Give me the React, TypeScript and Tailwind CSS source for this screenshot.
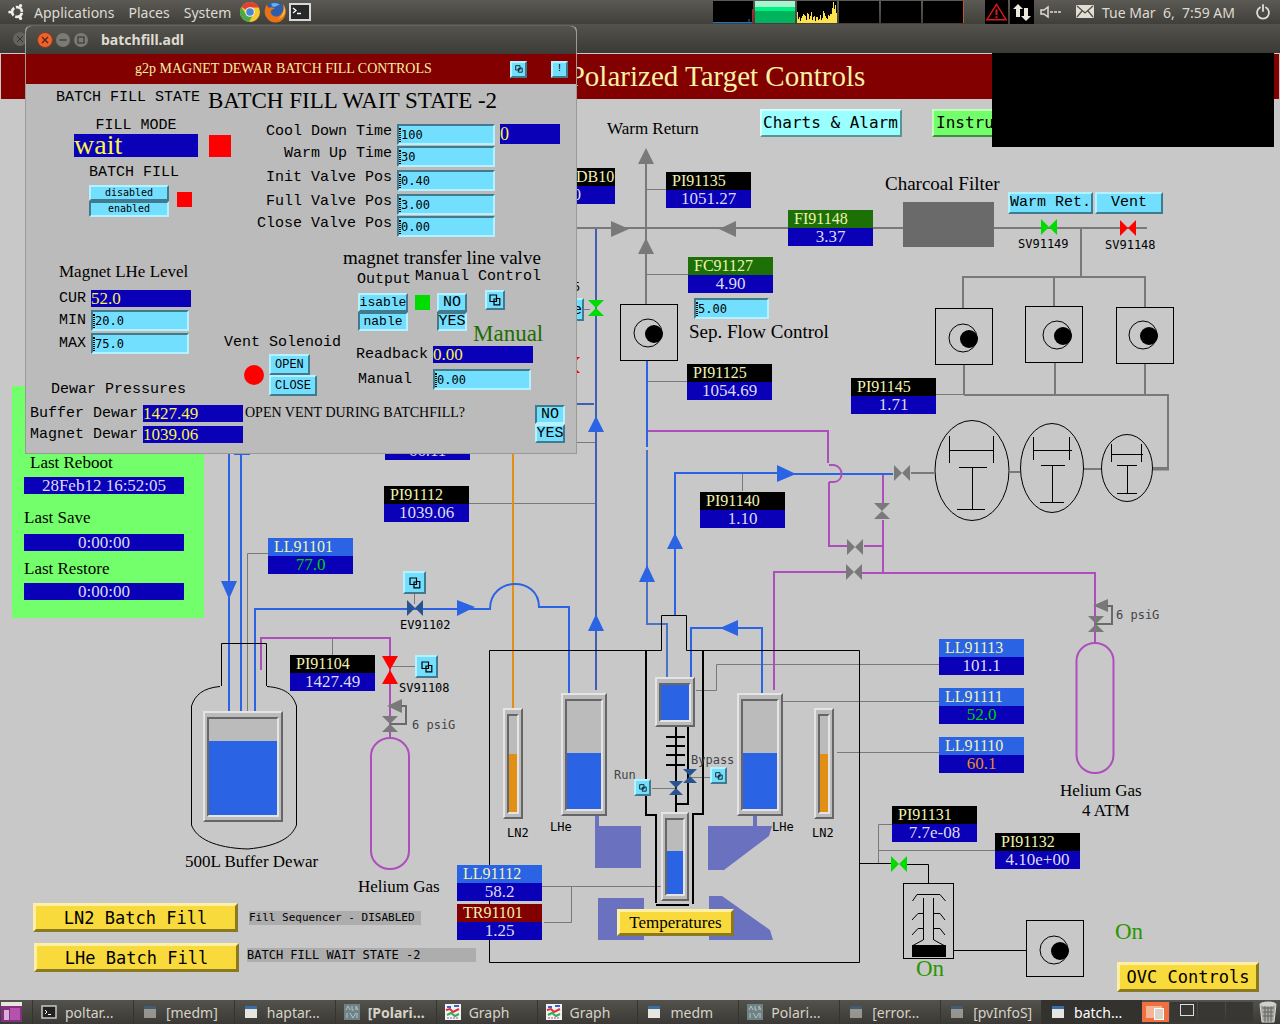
import React from "react";

const SERIF = "font-['Liberation_Serif',serif]";
const MONO = "font-['Liberation_Mono',monospace]";
const CYAN_UP = "border-2 border-t-[#b5f1ff] border-l-[#b5f1ff] border-b-[#417a8c] border-r-[#417a8c] bg-[#73dfff] text-black";
const CYAN_DOWN = "border-2 border-t-[#417a8c] border-l-[#417a8c] border-b-[#b5f1ff] border-r-[#b5f1ff] bg-[#73dfff] text-black";
const YELLOW = "border-[3px] border-t-[#fdf0a4] border-l-[#fdf0a4] border-b-[#8a7920] border-r-[#8a7920] bg-[#f9da3c] text-black";

type Tone = "black" | "green" | "blue" | "red";
const tones: Record<Tone, string> = {
  black: "bg-black",
  green: "bg-[#1c7006]",
  blue: "bg-[#2a63e4]",
  red: "bg-[#820000]",
};

function Tag({ at, name, value, tone = "black", color = "text-[#dcdcf0]", pad = "pl-1.5" }: { at: string; name: string; value: string; tone?: Tone; color?: string; pad?: string }) {
  return (
    <div className={`absolute w-[85px] leading-[18px] ${SERIF} ${at}`}>
      <div className={`h-[18px] text-[16px] text-[#f0f2b0] ${pad} ${tones[tone]}`}>{name}</div>
      <div className={`h-[18px] bg-[#0a00b8] text-center text-[17px] ${color}`}>{value}</div>
    </div>
  );
}

function Label({ at, children }: { at: string; children: React.ReactNode }) {
  return <span className={`absolute whitespace-pre leading-4 ${at}`}>{children}</span>;
}

function Readout({ className, children }: { className: string; children: React.ReactNode }) {
  return <output className={`block bg-[#0a00b8] text-[#f9f34a] ${SERIF} ${className}`}>{children}</output>;
}

function Field({ label, value, className }: { label: string; value: string; className: string }) {
  return (
    <span className={`block h-[21px] ${className}`}>
      <input aria-label={label} defaultValue={value} className={`block h-full w-full rounded-none pl-0.5 font-['DejaVu_Sans_Mono',monospace] text-[12px] outline-none ${CYAN_DOWN}`} />
      <span className="pointer-events-none absolute left-0.5 top-1 h-3.5 w-0.5 border-x border-dotted border-black" />
    </span>
  );
}

function PagesIcon({ className }: { className: string }) {
  return (
    <svg viewBox="0 0 12 12" className={className} fill="none" stroke="black" strokeWidth="1.2" aria-hidden="true">
      <path d="M1 1H7.5V7.5H1Z M5 8V10.8H10.8V4.5H8" />
      <path d="M5 8V5H8" />
    </svg>
  );
}

function RelatedButton({ at, small, label }: { at: string; small?: boolean; label: string }) {
  return (
    <button aria-label={label} className={`flex items-center justify-center ${small ? "size-[17px]" : "size-[23px]"} ${CYAN_UP} ${at}`}>
      <PagesIcon className={small ? "size-2" : "size-3"} />
    </button>
  );
}

function Valve({ x, y, fill = "#797979", vertical, r = 8 }: { x: number; y: number; fill?: string; vertical?: boolean; r?: number }) {
  const d = vertical
    ? `M${x - r} ${y - r}H${x + r}L${x} ${y}L${x + r} ${y + r}H${x - r}L${x} ${y}Z`
    : `M${x - r} ${y - r}V${y + r}L${x} ${y}L${x + r} ${y + r}V${y - r}L${x} ${y}Z`;
  return <path d={d} fill={fill} />;
}

function Pump({ x, y, cx, cy }: { x: number; y: number; cx: number; cy: number }) {
  return (
    <g>
      <rect x={x + 0.5} y={y + 0.5} width="57" height="56" fill="none" stroke="black" />
      <circle cx={cx} cy={cy} r="14" fill="none" stroke="black" />
      <circle cx={cx + 6} cy={cy + 1} r="9" fill="black" />
    </g>
  );
}

function Gauge({ x, y, w, h, level, fill = "#2a63e4" }: { x: number; y: number; w: number; h: number; level: number; fill?: string }) {
  const ix = x + 4, iy = y + 6, iw = w - 8, ih = h - 11;
  return (
    <g>
      <rect x={x} y={y} width={w} height={h} fill="#bbbbbb" />
      <path d={`M${x} ${y + h}V${y}H${x + w}L${x + w - 2} ${y + 2}H${x + 2}V${y + h - 2}Z`} fill="#e4e4e4" />
      <path d={`M${x} ${y + h}H${x + w}V${y}L${x + w - 2} ${y + 2}V${y + h - 2}H${x + 2}Z`} fill="#666666" />
      <path d={`M${ix} ${iy + ih}V${iy}H${ix + iw}L${ix + iw - 2} ${iy + 2}H${ix + 2}V${iy + ih - 2}Z`} fill="#666666" />
      <path d={`M${ix} ${iy + ih}H${ix + iw}V${iy}L${ix + iw - 2} ${iy + 2}V${iy + ih - 2}H${ix + 2}Z`} fill="#e4e4e4" />
      <rect x={ix + 2} y={level} width={iw - 4} height={iy + ih - 2 - level} fill={fill} />
    </g>
  );
}

function Diagram() {
  return (
    <svg className="absolute left-0 top-0 h-[1000px] w-[1280px]" viewBox="0 0 1280 1000" fill="none" aria-hidden="true">
      <g fill="#6a72c0">
        <path d="M595 816H599V826H641V868H595Z M753 816H757V826H772L769 836L724 870H708V826H753Z M598 898H644V940H598Z M709 896H722L770 930L773 940H709Z" />
      </g>
      <g stroke="#797979" strokeWidth="2">
        <path d="M646 160V304M576 228H903M994 228H1147M1081 229V276M963 308V277H1145V307M1054 277V306M964 365V395M1055 362V395M1145 364V395M964 395H1168V468H1153M1010 472H1020M1084 469H1101M911 473H934" />
        <path d="M1153 469H1169" strokeWidth="3" />
      </g>
      <g stroke="#797979">
        <path d="M647 189.5H666M647 274.5H688M647 381.5H687M936 394.5H964M742.5 474V491M577 442.5H596M583 309.5H590M469 503.5H595M247.5 711V553.5H268M414.5 593V604M332.5 638V655M392 666.5H415M696 690.5H716.5V664.5H939M783 701.5H939M837 752.5H939M542 886.5H661M571.5 886V922.5H544M652 788.5H676M691 777.5H710M892 824.5H878.5V863M878 850.5H995" />
      </g>
      <path d="M513 454V708" stroke="#e19015" strokeWidth="2" />
      <g stroke="#ae4ebc" strokeWidth="2">
        <path d="M648 431H828V463M829 482V546H847M864 546H883M883 474V503M883 520V573M846 572H774V690M862 573H1095V642M261 670V638H390V738" />
        <path d="M371 756A19 18 0 0 1 409 756V851A19 18 0 0 1 371 851Z" />
        <path d="M1076.500 661A18.500 18 0 0 1 1113.500 661V755A18.500 18 0 0 1 1076.500 755Z" />
      </g>
      <g stroke="#2a63e4" strokeWidth="2">
        <path d="M229 453V712M241 454V712M234 454H250M255 712V609H490C490 576 539 576 539 607H569V693M647 361V447M675 615V473H780M790 474H893M691 677V628H762V693" />
      </g>
      <path d="M596 229V690M576 404H594" stroke="#3d60b0" strokeWidth="2" />
      <path d="M647 450V624H667V677" stroke="#4a72c8" strokeWidth="2" />
      <path d="M829 465H834C844 467 844 481 834 482H829" stroke="#ae4ebc" strokeWidth="2" />

      <g stroke="black">
        <path d="M489.500 650.500H661.500V615.500H686.500V650.500H859.500V962.500H489.500Z" />
        <path d="M221.500 686V643.500H266.500V686M220 686.500C203 688 195 695 191.500 706V825C196 838 214 848 248 849C279 846 292 837 296.500 825V706C293 695 286 688 267 686.500" />
        <path d="M860 863.500H891M907 864.500H928.500V883M953 950.500H1026" />
        <ellipse cx="972" cy="470.500" rx="37" ry="50" />
        <ellipse cx="1052" cy="468" rx="31.500" ry="44.500" />
        <ellipse cx="1127" cy="468" rx="25.500" ry="33.500" />
        <path d="M949.500 436V463M993.500 436V463M949 450.500H993M959 467.500H987M972.500 467V509M957 509.500H985" />
        <path d="M1033.500 437V460M1069.500 437V460M1033 450.500H1072M1041 465.500H1065M1052.500 465V502M1040 502.500H1064" />
        <path d="M1111.500 444V462M1141.500 444V462M1111 454.500H1143M1117 465.500H1137M1127.500 465V493M1117 493.500H1137" />
        <rect x="903.500" y="883.500" width="50" height="75" />
        <path d="M912.500 901L917 894.500H940L945.500 901M923.500 898V940M933.500 898V940M923 913.500H918L912 920M934 913.500H940L945 920M923 928.500H918L912 935M934 928.500H940L945 935M923 940L912 946M934 940L945 946" />
      </g>
      <g stroke="black" strokeWidth="2">
        <path d="M646 650V815H656V903M656 905H689M703 650V814H693V904M676 727V812M688 727V804H676M666 737H685M666 746H685M666 755H685M666 765H685" />
      </g>
      <rect x="912" y="945" width="34" height="12" fill="black" />
      <rect x="903" y="202" width="91" height="45" fill="#6a6a6a" />

      <g fill="#797979">
        <path d="M646 148L654 164H638ZM646 238L654 254H638ZM611 221V237L629 229ZM736 221V237L719 229Z" />
        <path d="M1093 605.500L1108 599V612ZM387 706L402 699V713Z" />
      </g>
      <g stroke="#6a6a6a" strokeWidth="2">
        <path d="M1107 606H1112V624H1095M401 706H406V724H390" />
      </g>
      <g fill="#2a63e4">
        <path d="M596 416L604 432H588ZM596 614L604 631H588ZM647 565L655 582H639ZM675 533L683 549H667ZM777 465V482L796 474ZM457 600V616L475 607ZM229 599L221 581H237ZM720 628L738 620V636Z" />
      </g>

      <Valve x={902} y={473} />
      <Valve x={882} y={511} vertical />
      <Valve x={855} y={547} />
      <Valve x={854} y={572} />
      <Valve x={1096} y={624} vertical />
      <Valve x={390} y={724} vertical />
      <Valve x={1049} y={227} fill="#00dc00" r={8} />
      <Valve x={1128} y={228} fill="#ff0000" r={8} />
      <Valve x={596} y={308} fill="#00dc00" vertical />
      <Valve x={572} y={365} fill="#ff0000" vertical />
      <Valve x={899} y={864} fill="#00dc00" />
      <Valve x={415} y={608} fill="#27548f" />
      <Valve x={676} y={788} fill="#27548f" vertical r={7} />
      <Valve x={690} y={776} fill="#27548f" vertical r={7} />
      <path d="M382 656H398L390 670L398 684H382L390 670Z" fill="#ff0000" />

      <Pump x={620} y={304} cx={648} cy={333} />
      <Pump x={935} y={308} cx={963} cy={338} />
      <Pump x={1025} y={306} cx={1057} cy={335} />
      <Pump x={1116} y={307} cx={1143} cy={335} />
      <Pump x={1026} y={920} cx={1054} cy={950} />

      <Gauge x={203} y={711} w={80} h={111} level={741} />
      <Gauge x={503} y={708} w={20} h={111} level={754} fill="#e19015" />
      <Gauge x={561} y={693} w={46} h={123} level={753} />
      <Gauge x={655} y={677} w={40} h={50} level={685} />
      <Gauge x={661} y={812} w={28} h={89} level={851} />
      <Gauge x={737} y={693} w={46} h={123} level={753} />
      <Gauge x={814} y={708} w={20} h={111} level={754} fill="#e19015" />
    </svg>
  );
}

function MenuIcons() {
  return (
    <div className="ml-2 flex items-center gap-0.5">
      <svg viewBox="0 0 22 22" className="size-[22px]" aria-label="Chrome">
        <circle cx="11" cy="11" r="10" fill="#f6ca2c" />
        <path d="M11 11L2.300 6A10 10 0 0 1 20 6.500H11Z" fill="#dd4132" />
        <path d="M2.300 6A10 10 0 0 0 10 21L14.500 13L7 13.500Z" fill="#4ca84a" />
        <circle cx="11" cy="11" r="4.800" fill="#f2f2f2" />
        <circle cx="11" cy="11" r="3.800" fill="#4a86d4" />
      </svg>
      <svg viewBox="0 0 24 24" className="size-6" aria-label="Firefox">
        <circle cx="12" cy="12" r="10" fill="#2b5fae" />
        <path d="M4 4C2 8 0 13 4 18C8 24 17 24 21 18C24 13 23 7 20 4C21 8 21 11 18 14C15 18 9 17 8 13C7 11 9 9 12 9C10 7 7 7 6 8C5 7 4 6 4 4Z" fill="#ea7216" />
        <path d="M20 4C22 9 20 16 15 19C20 18 23 13 22 9Z" fill="#f7bd3a" />
        <path d="M8 4C11 2 15 3 17 5C14 5 13 7 10 7Z" fill="#72aee6" />
      </svg>
      <svg viewBox="0 0 22 18" className="h-[18px] w-[22px]" aria-label="Terminal">
        <rect x="1" y="1" width="20" height="16" fill="#26282a" stroke="#d8d8d8" strokeWidth="2" />
        <path d="M4 5L7 7.500L4 10M8 10.500H12" stroke="white" fill="none" strokeWidth="1.300" />
      </svg>
    </div>
  );
}

function SystemMonitor() {
  const load = [11, 4, 6, 2, 5, 7, 9, 8, 7, 3, 10, 9, 4, 7, 11, 3, 6, 7, 2, 6, 6, 3, 4, 8, 3, 5, 12, 10, 7, 5, 4, 8, 7, 9, 9, 15, 21, 14, 18, 10];
  return (
    <div className="flex gap-0.5 border-r border-[#c05a20]" role="img" aria-label="System monitor">
      <svg viewBox="0 0 40 22" className="h-[22px] w-10 bg-black"><path d="M0 21.500H40M36 22V18" stroke="#1476c8" /><path d="M39.500 22V8" stroke="#e01010" /></svg>
      <svg viewBox="0 0 40 22" className="h-[22px] w-10"><path d="M0 0H40V6H0Z" fill="#a5f5d0" /><path d="M0 6H40V10H0Z" fill="#00f082" /><path d="M0 10H40V22H0Z" fill="#00b35c" /></svg>
      <svg viewBox="0 0 40 22" className="h-[22px] w-10 bg-black">{load.map((v, i) => <rect key={i} x={i} y={22 - v} width="1" height={v} fill="#fbe24c" />)}</svg>
      <div className="h-[22px] w-10 bg-black" /><div className="h-[22px] w-10 bg-black" /><div className="h-[22px] w-10 bg-black" />
    </div>
  );
}

function TopPanel() {
  return (
    <header className="flex h-6 shrink-0 items-center bg-linear-to-b from-[#5b5a54] to-[#403f3a] pl-2 text-[14px] text-[#dfdbd2]">
      <svg viewBox="0 0 20 20" className="size-[18px]" fill="none" aria-hidden="true">
        <circle cx="10" cy="10" r="5.500" stroke="#eeeeee" strokeWidth="3" strokeDasharray="9.500 2" strokeDashoffset="-1" />
        <g fill="#eeeeee"><circle cx="2" cy="10" r="1.800" /><circle cx="14" cy="2.800" r="1.800" /><circle cx="14" cy="17.200" r="1.800" /></g>
      </svg>
      <nav className="ml-2 flex gap-3.5">
        <button>Applications</button><button>Places</button><button>System</button>
      </nav>
      <MenuIcons />
      <div className="ml-auto flex items-center">
        <SystemMonitor />
        <div className="ml-[21px] flex gap-0.5">
          <svg viewBox="0 0 24 24" className="h-6 w-[23px] bg-black" fill="none" stroke="#e01818" aria-label="Alert"><path d="M12 4L22 20H2Z" strokeWidth="1.500" /><path d="M12 9V15M12 16.500V18.500" strokeWidth="2" /></svg>
          <svg viewBox="0 0 24 24" className="size-6 bg-black" fill="#eee8dc" aria-label="Network"><path d="M8 4L13 9H10V17H6V9H3ZM16 21L11 16H14V8H18V16H21Z" /></svg>
        </div>
        <svg viewBox="0 0 22 16" className="ml-1.5 h-4 w-[22px]" fill="none" stroke="#dfdbd2" aria-label="Volume"><path d="M1 6H4L8 3V13L4 10H1Z" strokeWidth="1.500" /><path d="M10 8H21" strokeDasharray="3 1" strokeWidth="1.500" /></svg>
        <svg viewBox="0 0 18 14" className="ml-3.5 h-3.5 w-[18px]" aria-label="Mail"><rect width="18" height="13" rx="1" fill="#e3ded3" /><path d="M1 1L9 8L17 1M1 12L6 6M17 12L12 6" stroke="#504f4a" fill="none" strokeWidth="1.300" /></svg>
        <time className="ml-2 whitespace-pre text-[14px]">Tue Mar  6,  7:59 AM</time>
        <svg viewBox="0 0 16 16" className="ml-5 mr-[9px] size-4" fill="none" stroke="#e3ded3" strokeWidth="1.800" strokeLinecap="round" aria-label="Power"><path d="M5 3.500A6 6 0 1 0 11 3.500M8 1V7" /></svg>
      </div>
    </header>
  );
}

function WindowIcons() {
  return (
    <svg viewBox="0 0 54 18" className="h-[18px] w-[54px]" aria-hidden="true">
      <circle cx="9" cy="9" r="7.500" fill="#ec6330" stroke="#8a3a1c" /><path d="M6 6L12 12M12 6L6 12" stroke="#5a2412" strokeWidth="1.300" />
      <circle cx="27" cy="9" r="7" fill="#7b7a73" /><path d="M23.500 9H30.500" stroke="#3a3935" strokeWidth="1.300" />
      <circle cx="45" cy="9" r="7" fill="#7b7a73" /><rect x="42" y="6" width="6" height="6" fill="none" stroke="#3a3935" strokeWidth="1.200" />
    </svg>
  );
}

function BatchFillWindow() {
  const fields: [string, string, string][] = [
    ["Cool Down Time", "100", ""],
    ["Warm Up Time", "30", ""],
    ["Init Valve Pos", "0.40", "mt-0.5"],
    ["Full Valve Pos", "3.00", "mt-0.5"],
    ["Close Valve Pos", "0.00", ""],
  ];
  return (
    <section aria-label="batchfill.adl" className={`absolute left-[25px] top-[25px] w-[552px] rounded-t-md border border-[#9c9a94] border-t-[#65645e] bg-[#bbbbbb] pb-2.5 text-black ${MONO} text-[15px] leading-4`}>
      <div className="flex h-7 items-center rounded-t-md bg-linear-to-b from-[#55544e] to-[#3c3b37] pl-2.5 font-['Noto_Sans',sans-serif]">
        <WindowIcons />
        <h2 className="ml-[11px] text-[14px] font-bold text-[#dfdbd2]">batchfill.adl</h2>
      </div>
      <div className="flex h-[30px] items-center bg-[#820000] pr-2">
        <h3 className={`ml-[109px] text-[14px] text-[#f8f0a8] ${SERIF}`}>g2p MAGNET DEWAR BATCH FILL CONTROLS</h3>
        <div className="ml-auto flex gap-6">
          <RelatedButton at="" small label="Related displays" />
          <button className={`flex size-[17px] items-center justify-center text-[10px] ${CYAN_UP}`}>!</button>
        </div>
      </div>

      <div className="flex h-[34px] items-center gap-2 pl-[30px]">
        <span className="-mt-1.5">BATCH FILL STATE</span>
        <output className={`whitespace-nowrap text-[23px] ${SERIF}`}>BATCH FILL WAIT STATE -2</output>
      </div>

      <div className="flex h-[130px]">
        <div className="w-[214px] pl-12">
          <div className="w-[124px] text-center">FILL MODE</div>
          <div className="flex items-center gap-[11px]">
            <Readout className="h-[23px] w-[124px] text-[28px] leading-[22px]">wait</Readout>
            <span className="size-[22px] bg-[#ff0000]" />
          </div>
          <div className="mt-2 pl-[15px]">BATCH FILL</div>
          <div className="mt-1 flex items-center gap-2 pl-[15px]">
            <div className="flex w-20 flex-col font-['DejaVu_Sans_Mono',monospace] text-[10px] leading-3">
              <button className={`h-4 ${CYAN_UP}`}>disabled</button>
              <button className={`h-4 ${CYAN_DOWN}`}>enabled</button>
            </div>
            <span className="-mt-1 size-[15px] bg-[#ff0000]" />
          </div>
        </div>
        <div className="flex gap-[5px] pt-1.5">
          <div>
            {fields.map(([name, value, gap]) => (
              <label key={name} className={`flex h-[22px] items-start gap-[5px] ${gap}`}>
                <span className="w-[152px] whitespace-nowrap text-right">{name}</span>
                <Field label={name} value={value} className="relative w-[98px]" />
              </label>
            ))}
          </div>
          <Readout className="h-5 w-[60px] text-[18px] leading-5">0</Readout>
        </div>
      </div>

      <div className="flex h-[150px]">
        <div className="flex w-[198px] flex-col pl-[33px] pt-4">
          <h4 className={`text-[17px] ${SERIF}`}>Magnet LHe Level</h4>
          <div className="mt-2.5 flex items-center gap-[5px]">CUR<Readout className="h-[17px] w-[100px] text-[17px] leading-[17px]">52.0</Readout></div>
          <label className="mt-[3px] flex items-center gap-[5px]">MIN<Field label="MIN" value="20.0" className="relative w-[98px]" /></label>
          <label className="mt-0.5 flex items-center gap-[5px]">MAX<Field label="MAX" value="75.0" className="relative w-[98px]" /></label>
          <h4 className="-ml-2 mt-auto whitespace-nowrap">Dewar Pressures</h4>
        </div>
        <div className="flex w-[119px] flex-col pt-[87px]">
          <h4 className="whitespace-nowrap">Vent Solenoid</h4>
          <div className="mt-[3px] flex items-center gap-[5px] pl-5">
            <span className="size-5 rounded-full bg-[#ff0000]" />
            <div className="flex flex-col items-start text-[12px]">
              <button className={`h-[21px] px-1 ${CYAN_UP}`}>OPEN</button>
              <button className={`h-[21px] px-1 ${CYAN_UP}`}>CLOSE</button>
            </div>
          </div>
        </div>
        <div className="min-w-0 flex-1 pt-0.5">
          <h4 className={`whitespace-nowrap text-[19px] ${SERIF}`}>magnet transfer line valve</h4>
          <div className="mt-[3px] flex gap-1 pl-3.5"><span className="pt-[3px]">Output</span><span>Manual Control</span></div>
          <div className="mt-[5px] flex items-start pl-[15px]">
            <div className="flex w-[50px] flex-col text-[13px]">
              <button className={`flex h-[19px] items-center justify-center ${CYAN_UP}`}>isable</button>
              <button className={`flex h-[19px] items-center justify-center ${CYAN_DOWN}`}>nable</button>
            </div>
            <span className="ml-[7px] mt-0.5 size-[15px] bg-[#00dc00]" />
            <div className="ml-[7px] flex w-[30px] flex-col">
              <button className={`flex h-[19px] items-center justify-center ${CYAN_UP}`}>NO</button>
              <button className={`flex h-[19px] items-center justify-center ${CYAN_DOWN}`}>YES</button>
            </div>
            <div className="ml-1.5">
              <RelatedButton at="-mt-[3px] ml-3 !size-5" label="Valve control" />
              <output className={`mt-3 block text-[23px] leading-6 text-[#216c00] ${SERIF}`}>Manual</output>
            </div>
          </div>
          <div className="flex items-center gap-[5px] pl-[13px]">Readback<Readout className="h-[17px] w-[100px] text-[17px] leading-[17px]">0.00</Readout></div>
          <label className="mt-1.5 flex items-center gap-[21px] pl-[15px]">Manual<Field label="Manual valve position" value="0.00" className="relative w-[98px]" /></label>
        </div>
      </div>

      <div className="flex items-start gap-0.5 pl-1 pt-[7px]">
        <div className="flex flex-col gap-1">
          <div className="flex items-center gap-[5px]"><span className="w-[108px] whitespace-nowrap">Buffer Dewar</span><Readout className="h-[17px] w-[100px] text-[17px] leading-[17px]">1427.49</Readout></div>
          <div className="flex items-center gap-[5px]"><span className="w-[108px] whitespace-nowrap">Magnet Dewar</span><Readout className="h-[17px] w-[100px] text-[17px] leading-[17px]">1039.06</Readout></div>
        </div>
        <span className={`whitespace-nowrap text-[14px] ${SERIF}`}>OPEN VENT DURING BATCHFILL?</span>
        <div className="ml-auto mr-[11px] flex w-[30px] flex-col">
          <button className={`flex h-[19px] items-center justify-center ${CYAN_DOWN}`}>NO</button>
          <button className={`flex h-[19px] items-center justify-center ${CYAN_UP}`}>YES</button>
        </div>
      </div>
    </section>
  );
}

function SaveStatus() {
  const row = "bg-[#0a00b8] text-center text-[#dcdcf0] h-[17px] leading-[17px]";
  return (
    <section className={`absolute left-3 top-[386px] flex w-48 flex-col bg-[#73ff6b] pb-[18px] pl-3 pr-5 pt-[69px] text-[17px] leading-4 text-black ${SERIF}`}>
      <span className="pl-1.5">Last Reboot</span>
      <output className={`mt-1.5 ${row}`}>28Feb12 16:52:05</output>
      <span className="mt-4">Last Save</span>
      <output className={`mt-2 ${row}`}>0:00:00</output>
      <span className="mt-2.5">Last Restore</span>
      <output className={`mt-1.5 ${row}`}>0:00:00</output>
    </section>
  );
}

function TaskIcon({ kind }: { kind: string }) {
  if (kind === "term")
    return <svg viewBox="0 0 16 16" className="size-4"><rect x="1" y="2" width="14" height="12" fill="#222" stroke="#c8c8c8" strokeWidth="1.500" /><path d="M4 6L6 8L4 10M7 10.500H10" stroke="white" fill="none" /></svg>;
  if (kind === "graph")
    return <svg viewBox="0 0 16 16" className="size-4"><rect width="16" height="16" fill="#f2f2f2" /><path d="M2 3H6M9 2H14" stroke="#3a62c8" strokeWidth="2" /><path d="M1 6L5 5L8 8L14 5" stroke="#e03040" fill="none" strokeWidth="2" /><path d="M2 11L6 9L10 12L14 10" stroke="#30b050" fill="none" strokeWidth="2" /><path d="M2 14H14" stroke="#b040c0" strokeDasharray="2 1" /></svg>;
  if (kind === "alh")
    return <svg viewBox="0 0 16 16" className="size-4"><rect width="16" height="16" fill="#6f8286" /><path d="M2 6L4 2L6 6M8 2V6H10M12 6V2L14 6M3 9V14M6 9L9 14M12 9L9 14M13 9V14" stroke="#b7c4c6" fill="none" /></svg>;
  return <svg viewBox="0 0 16 16" className={kind === "dim" ? "size-4 opacity-50" : "size-4"}><rect x="2" y="2" width="12" height="12" fill="#e6e6e0" /><rect x="2" y="2" width="12" height="3" fill="#3a6ea8" /></svg>;
}

function Taskbar() {
  const tasks: [string, string, string][] = [
    ["term", "poltar...", ""], ["dim", "[medm]", ""], ["win", "haptar...", ""], ["alh", "[Polari...", "font-bold"],
    ["graph", "Graph", ""], ["graph", "Graph", ""], ["win", "medm", ""], ["alh", "Polari...", ""],
    ["dim", "[error...", ""], ["dim", "[pvInfoS]", ""], ["win", "batch...", "bg-[#33322e] text-white"],
  ];
  return (
    <footer className="flex h-6 shrink-0 items-center bg-linear-to-b from-[#53524c] to-[#3a3935] text-[14px] text-[#d6d2c8]">
      <svg viewBox="0 0 24 24" className="h-6 w-6 shrink-0" aria-label="Show desktop"><rect x="1" y="2" width="21" height="20" fill="#83307e" /><rect x="1" y="2" width="21" height="4" fill="#e9e4dc" /><rect x="4" y="10" width="5" height="10" fill="#d8b0d8" /><rect x="10" y="8" width="10" height="12" fill="#b452ae" /></svg>
      <nav className="ml-2 flex min-w-0 flex-1">
        {tasks.map(([kind, name, extra], i) => (
          <button key={i} className={`flex h-6 min-w-0 flex-1 items-center gap-2 whitespace-nowrap border-l border-[#35342f] pl-2 ${extra}`}>
            <span className="shrink-0"><TaskIcon kind={kind} /></span>{name}
          </button>
        ))}
      </nav>
      <div className="flex h-6 w-[114px] shrink-0 gap-px py-0.5">
        <div className="relative w-[27px] bg-[#ef7140]"><span className="absolute left-1 top-1 h-3 w-4 bg-[#f7b597]" /><span className="absolute left-3 top-1.5 h-3 w-2.5 border border-white bg-[#d8d4c8]" /></div>
        <div className="relative w-[27px] bg-[#383733]"><span className="absolute left-2.5 top-0.5 h-3 w-3.5 border border-[#dddddd]" /></div>
        <div className="w-[27px] bg-[#383733]" /><div className="w-[27px] bg-[#383733]" />
      </div>
      <svg viewBox="0 0 22 24" className="h-6 w-[24px] shrink-0" aria-label="Trash"><path d="M3 4H19L17 22H5Z" fill="#a8a8a4" stroke="#dddddd" /><path d="M3 4H19M5 8H17M6 12H16M6 16H16M8 4V22M11 4V22M14 4V22" stroke="#63635f" /><ellipse cx="11" cy="4" rx="8" ry="2.500" fill="#d0d0cc" /></svg>
    </footer>
  );
}

export default function App() {
  return (
    <div className="relative flex min-h-screen flex-col overflow-hidden bg-[#c8c8c8] font-['Noto_Sans',sans-serif]">
      <TopPanel />
      <div className="flex h-[29px] shrink-0 items-center bg-linear-to-b from-[#53524c] to-[#3b3a36] pl-3">
        <svg viewBox="0 0 16 16" className="size-4" aria-hidden="true"><circle cx="8" cy="8" r="7" fill="#63625c" /><path d="M5 5L11 11M11 5L5 11" stroke="#35342f" /></svg>
      </div>
      <main className="flex-1 pt-px">
        <div className="mx-px flex h-[45px] items-center justify-center bg-[#820000]">
          <h1 className={`ml-[154px] text-[29px] text-[#f8f0a8] ${SERIF}`}>Polarized Target Controls</h1>
        </div>
        <Diagram />
        <SaveStatus />

        <div className={`text-[17px] text-black ${SERIF}`}>
          <Label at="left-[607px] top-[121px]">Warm Return</Label>
          <Label at="left-[885px] top-[176px] text-[19px]">Charcoal Filter</Label>
          <Label at="left-[689px] top-[324px] text-[19px]">Sep. Flow Control</Label>
          <Label at="left-[185px] top-[854px]">500L Buffer Dewar</Label>
          <Label at="left-[358px] top-[879px]">Helium Gas</Label>
          <Label at="left-[1060px] top-[783px]">Helium Gas</Label>
          <Label at="left-[1082px] top-[803px]">4 ATM</Label>
          <Label at="left-[916px] top-[961px] text-[23px] text-[#2b9600]">On</Label>
          <Label at="left-[1115px] top-[924px] text-[23px] text-[#2b9600]">On</Label>
        </div>

        <div className="font-['DejaVu_Sans_Mono',monospace] text-[12px] text-black">
          <Label at="left-[1018px] top-[236px]">SV91149</Label>
          <Label at="left-[1105px] top-[237px]">SV91148</Label>
          <Label at="left-[400px] top-[617px]">EV91102</Label>
          <Label at="left-[399px] top-[680px]">SV91108</Label>
          <Label at="left-[412px] top-[717px] text-[#444444]">6 psiG</Label>
          <Label at="left-[1116px] top-[607px] text-[#444444]">6 psiG</Label>
          <Label at="left-[507px] top-[825px]">LN2</Label>
          <Label at="left-[550px] top-[819px]">LHe</Label>
          <Label at="left-[772px] top-[819px]">LHe</Label>
          <Label at="left-[812px] top-[825px]">LN2</Label>
          <Label at="left-[614px] top-[767px] text-[#444444]">Run</Label>
          <Label at="left-[691px] top-[752px] text-[#444444]">Bypass</Label>
          <Label at="left-[573px] top-[279px]">5</Label>
          <div className="absolute left-[249px] top-[911px] h-3.5 w-[172px] whitespace-nowrap bg-[#adadad] text-[11px] leading-3.5">Fill Sequencer - DISABLED</div>
          <div className="absolute left-[247px] top-[948px] h-3.5 w-[229px] whitespace-nowrap bg-[#adadad] text-[12px] leading-3.5">BATCH FILL WAIT STATE -2</div>
        </div>

        <Tag at="left-[530px] top-[168px]" name="DB10" value="30" pad="pl-[46px]" />
        <Tag at="left-[666px] top-[172px]" name="PI91135" value="1051.27" />
        <Tag at="left-[788px] top-[210px]" name="FI91148" value="3.37" tone="green" />
        <Tag at="left-[688px] top-[257px]" name="FC91127" value="4.90" tone="green" />
        <Tag at="left-[687px] top-[364px]" name="PI91125" value="1054.69" />
        <Tag at="left-[851px] top-[378px]" name="PI91145" value="1.71" />
        <Tag at="left-[385px] top-[424px]" name="PI91111" value="66.11" />
        <Tag at="left-[384px] top-[486px]" name="PI91112" value="1039.06" />
        <Tag at="left-[700px] top-[492px]" name="PI91140" value="1.10" />
        <Tag at="left-[268px] top-[538px]" name="LL91101" value="77.0" tone="blue" color="text-[#00d000]" />
        <Tag at="left-[290px] top-[655px]" name="PI91104" value="1427.49" />
        <Tag at="left-[939px] top-[639px]" name="LL91113" value="101.1" tone="blue" />
        <Tag at="left-[939px] top-[688px]" name="LL91111" value="52.0" tone="blue" color="text-[#00d000]" />
        <Tag at="left-[939px] top-[737px]" name="LL91110" value="60.1" tone="blue" color="text-[#e19015]" />
        <Tag at="left-[892px] top-[806px]" name="PI91131" value="7.7e-08" />
        <Tag at="left-[995px] top-[833px]" name="PI91132" value="4.10e+00" />
        <Tag at="left-[457px] top-[865px]" name="LL91112" value="58.2" tone="blue" />
        <Tag at="left-[457px] top-[904px]" name="TR91101" value="1.25" tone="red" />

        <Field label="Sep. Flow Control" value="5.00" className="absolute left-[694px] top-[298px] w-[75px]" />
        <RelatedButton at="absolute left-[403px] top-[571px]" label="EV91102 control" />
        <RelatedButton at="absolute left-[415px] top-[655px]" label="SV91108 control" />
        <RelatedButton at="absolute left-[634px] top-[779px]" small label="Run valve control" />
        <RelatedButton at="absolute left-[710px] top-[767px]" small label="Bypass valve control" />
        <button className={`absolute left-[540px] top-[298px] h-[23px] w-11 text-right text-[15px] ${MONO} ${CYAN_UP}`}>e</button>

        <div className={`text-[15px] leading-4 ${MONO}`}>
          <button className={`absolute left-[1008px] top-[192px] h-[22px] w-[85px] whitespace-nowrap ${CYAN_UP}`}>Warm Ret.</button>
          <button className={`absolute left-[1095px] top-[192px] h-[22px] w-[68px] ${CYAN_UP}`}>Vent</button>
        </div>
        <div className="font-['DejaVu_Sans_Mono',monospace] text-[17px] leading-5">
          <button className="absolute left-[760px] top-[109px] h-7 w-[142px] whitespace-nowrap border-2 border-b-[#5a9494] border-l-[#d5ffff] border-r-[#5a9494] border-t-[#d5ffff] bg-[#99ffff] pl-px text-left text-[16px] text-black">Charts &amp; Alarm</button>
          <button className="absolute left-[932px] top-[109px] h-7 w-[140px] border-2 border-b-[#3f8f3b] border-l-[#c0ffbc] border-r-[#3f8f3b] border-t-[#c0ffbc] bg-[#73ff6b] pl-0.5 text-left text-[16px] text-black">Instruments</button>
          <button className={`absolute left-[33px] top-[903px] h-[29px] w-[205px] ${YELLOW}`}>LN2 Batch Fill</button>
          <button className={`absolute left-[34px] top-[943px] h-[29px] w-[205px] ${YELLOW}`}>LHe Batch Fill</button>
          <button className={`absolute left-[1117px] top-[962px] h-[30px] w-[142px] ${YELLOW}`}>OVC Controls</button>
        </div>
        <button className={`absolute left-[617px] top-[909px] h-[27px] w-[117px] text-[17px] leading-5 ${SERIF} ${YELLOW}`}>Temperatures</button>
        <div className="absolute left-[992px] top-[53px] h-[94px] w-[282px] bg-black" />
      </main>
      <BatchFillWindow />
      <Taskbar />
    </div>
  );
}
